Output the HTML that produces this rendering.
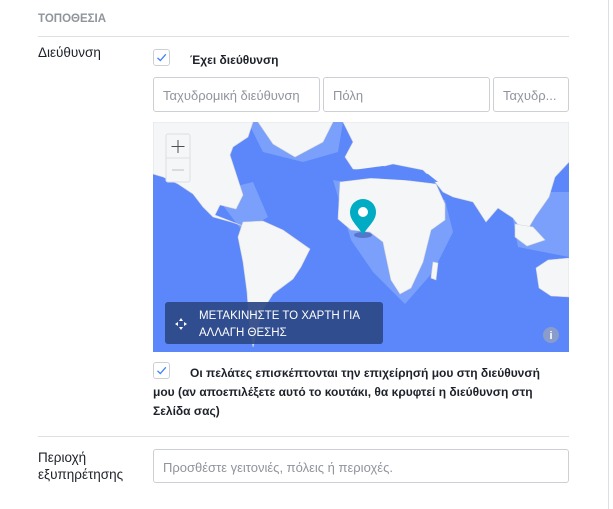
<!DOCTYPE html>
<html><head><meta charset="utf-8"><style>
*{box-sizing:border-box;margin:0;padding:0}
body{width:613px;height:509px;background:#fff;font-family:"Liberation Sans","Noto Sans CJK SC",sans-serif;position:relative;overflow:hidden;color:#1d2129}
.a{position:absolute}
.cb{position:absolute;width:17px;height:17px;border:1px solid #ccd0d5;border-radius:3px;background:#fff}
.cb svg{position:absolute;left:2px;top:2px}
.in{position:absolute;border:1px solid #ccd0d5;border-radius:3px;height:35px;font-size:13px;color:#90949c;padding:10px 0 0 9px;white-space:nowrap;overflow:hidden}
</style></head><body>
<div class="a" style="right:4px;top:0;width:1px;height:509px;background:#dddfe2"></div>
<div class="a" style="left:38px;top:13px;font-size:11.5px;font-weight:bold;color:#90949c">ΤΟΠΟΘΕΣΙΑ</div>
<div class="a" style="left:38px;top:36px;width:531px;height:1px;background:#dddfe2"></div>
<div class="a" style="left:38px;top:45px;font-size:13.5px">Διεύθυνση</div>
<div class="cb" style="left:153px;top:49px"><svg width="11" height="11" viewBox="0 0 11 11"><path d="M1.5 5.8 L4.3 8.5 L9.8 2.3" fill="none" stroke="#4080ff" stroke-width="1.3"/></svg></div>
<div class="a" style="left:190px;top:53px;font-size:12px;font-weight:bold">Έχει διεύθυνση</div>
<div class="in" style="left:153px;top:77px;width:167px">Ταχυδρομική διεύθυνση</div>
<div class="in" style="left:323px;top:77px;width:167px">Πόλη</div>
<div class="in" style="left:493px;top:77px;width:76px">Ταχυδρ...</div>
<svg class="a" style="left:153px;top:122px" width="416" height="230" viewBox="0 0 416 230">
<rect width="416" height="230" fill="#5b87fb"/>
<g fill="#7aa0fb"><path d="M180 58 L292 78 L300 110 L280 150 L252 182 L220 150 L198 118 Z"/><path d="M60 70 L100 60 L115 95 L90 110 Z"/><path d="M355 70 L416 70 L416 135 L365 125 Z"/><path d="M95 0 L190 0 L185 30 L150 40 L110 30 Z"/></g>
<g fill="#f5f6f8" stroke="#d4d6da" stroke-width="0.6">
<path d="M0 0 L100 0 L95 15 L80 25 L77 33 L90 73 L83 87 L67 83 L62 93 L80 100 L90 104 L78 100 L60 95 L50 85 L40 72 L25 62 L10 55 L0 52 Z"/>
<path d="M105 0 L180 0 L170 20 L142 35 L120 22 Z"/>
<path d="M190 0 L416 0 L416 40 L402 55 L396 75 L382 95 L372 112 L360 96 L345 86 L333 100 L320 80 L300 75 L290 70 L282 60 L270 48 L240 42 L215 48 L200 47 L192 35 L200 20 Z"/>
<path d="M187 60 L220 56 L250 58 L283 62 L292 82 L292 98 L278 108 L270 140 L258 166 L247 172 L238 158 L232 130 L230 120 L217 110 L198 108 L185 97 Z"/>
<path d="M90 100 L110 99 L130 108 L157 127 L148 145 L140 157 L120 172 L110 188 L104 210 L100 225 L96 200 L94 170 L90 140 L85 115 Z"/>
<path d="M383 146 L395 138 L416 136 L416 175 L398 174 L386 166 Z"/>
<path d="M280 140 L285 141 L283 158 L278 156 Z"/>
<path d="M362 102 L380 105 L392 118 L374 124 L362 115 Z"/>
</g>
<path d="M200 48 L230 44 L250 48 L275 52 L285 60 L250 58 L215 56 L198 54 Z" fill="#5b87fb"/>
<ellipse cx="210" cy="113" rx="9" ry="3" fill="#3c5aa8" opacity=".6"/>
<path d="M210 113 C205 104 197 99 197 90 A13 13 0 0 1 223 90 C223 99 215 104 210 113 Z" fill="#00abc4"/>
<circle cx="210" cy="90" r="5" fill="#fff"/>
<rect x="13" y="12" width="24" height="48" rx="2" fill="#f5f6f7" stroke="#dddfe2"/>
<line x1="13" y1="36" x2="37" y2="36" stroke="#dddfe2"/>
<path d="M25 18 V31 M18.5 24.5 H31.5" stroke="#4b4f56" stroke-width="1"/>
<path d="M19 48 H31" stroke="#bec3c9" stroke-width="1"/>
<rect x="12" y="180" width="218" height="42" rx="3" fill="#2d4887" opacity=".93"/>
<g fill="#fff"><path d="M28 196 l-2 3 h4 z M28 208 l-2 -3 h4 z M22 202 l3 -2 v4 z M34 202 l-3 -2 v4 z"/></g>
<text x="46" y="197" font-size="11.5" fill="#fff" font-family="Liberation Sans,sans-serif">ΜΕΤΑΚΙΝΗΣΤΕ ΤΟ ΧΑΡΤΗ ΓΙΑ</text>
<text x="46" y="214" font-size="11.5" fill="#fff" font-family="Liberation Sans,sans-serif">ΑΛΛΑΓΗ ΘΕΣΗΣ</text>
<circle cx="398" cy="213" r="8" fill="#8a9cc9"/>
<text x="398" y="217" font-size="11" font-weight="bold" fill="#fff" text-anchor="middle" font-family="Liberation Sans,sans-serif">i</text>
</svg>
<div class="cb" style="left:153px;top:362px"><svg width="11" height="11" viewBox="0 0 11 11"><path d="M1.5 5.8 L4.3 8.5 L9.8 2.3" fill="none" stroke="#4080ff" stroke-width="1.3"/></svg></div>
<div class="a" style="left:153px;top:364px;width:406px;font-size:12px;font-weight:bold;line-height:19px;text-indent:37px">Οι πελάτες επισκέπτονται την επιχείρησή μου στη διεύθυνσή μου (αν αποεπιλέξετε αυτό το κουτάκι, θα κρυφτεί η διεύθυνση στη Σελίδα σας)</div>
<div class="a" style="left:38px;top:436px;width:531px;height:1px;background:#dddfe2"></div>
<div class="a" style="left:38px;top:449px;font-size:13.5px;line-height:17px">Περιοχή<br>εξυπηρέτησης</div>
<div class="in" style="left:153px;top:449px;width:416px;height:34px">Προσθέστε γειτονιές, πόλεις ή περιοχές.</div>
</body></html>
